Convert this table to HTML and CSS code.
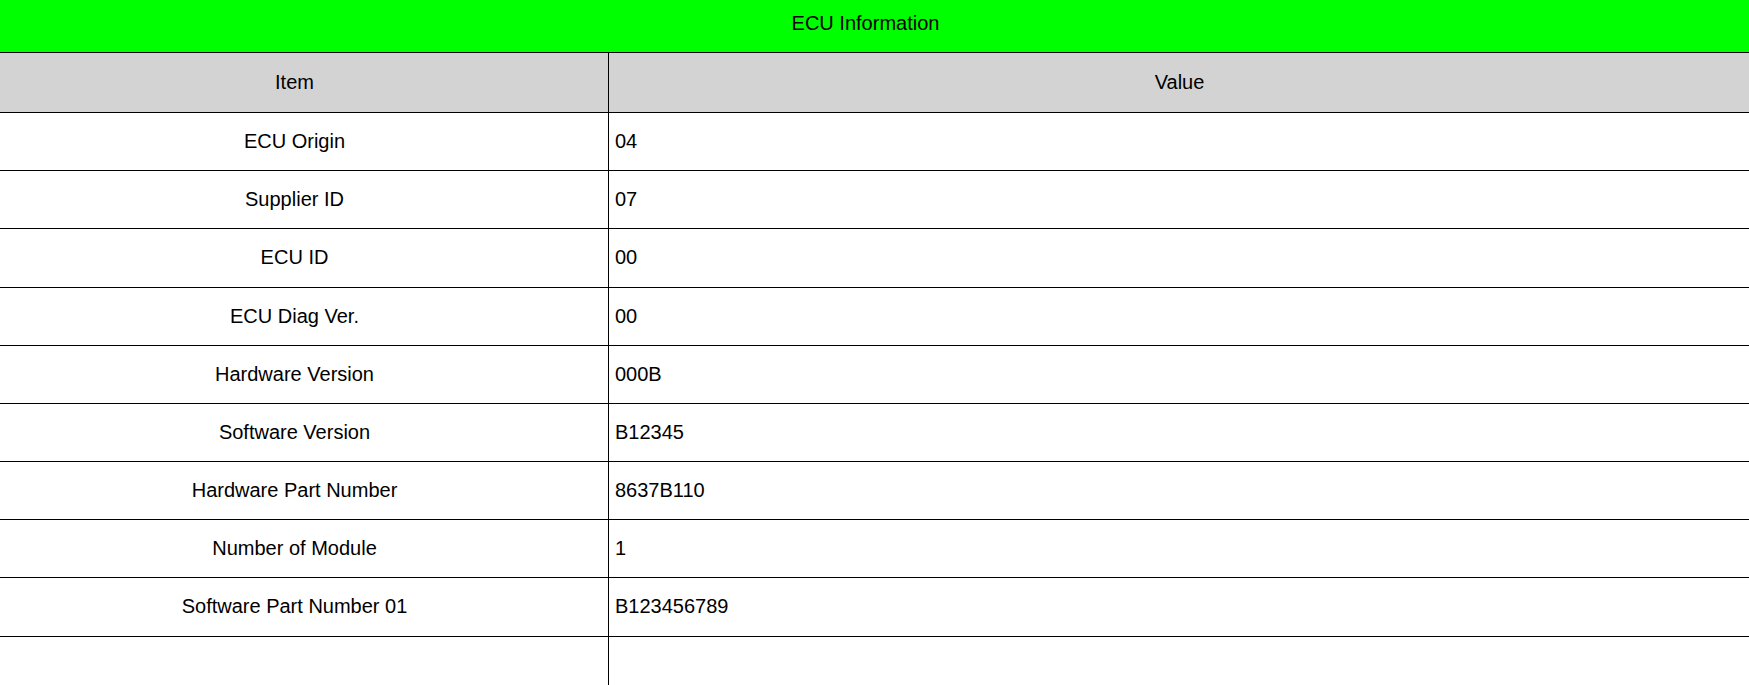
FILE: index.html
```html
<!DOCTYPE html>
<html lang="en">
<head>
<meta charset="utf-8">
<title>ECU Information</title>
<link rel="stylesheet" href="styles.css">
</head>
<body>
<table class="ecu-table">
  <colgroup>
    <col class="c-item">
    <col class="c-value">
  </colgroup>
  <thead>
    <tr><th class="title" colspan="2">ECU Information</th></tr>
    <tr class="head-row"><th class="col-item">Item</th><th class="col-value">Value</th></tr>
  </thead>
  <tbody>
    <tr><td class="item">ECU Origin</td><td class="value">04</td></tr>
    <tr><td class="item">Supplier ID</td><td class="value">07</td></tr>
    <tr><td class="item">ECU ID</td><td class="value">00</td></tr>
    <tr><td class="item">ECU Diag Ver.</td><td class="value">00</td></tr>
    <tr><td class="item">Hardware Version</td><td class="value">000B</td></tr>
    <tr><td class="item">Software Version</td><td class="value">B12345</td></tr>
    <tr><td class="item">Hardware Part Number</td><td class="value">8637B110</td></tr>
    <tr><td class="item">Number of Module</td><td class="value">1</td></tr>
    <tr><td class="item">Software Part Number 01</td><td class="value">B123456789</td></tr>
    <tr><td class="item">&nbsp;</td><td class="value">&nbsp;</td></tr>
  </tbody>
</table>
</body>
</html>
```
FILE: styles.css
```css
html, body {
  margin: 0;
  padding: 0;
  overflow: hidden;
  background: #ffffff;
}

body {
  font-family: "Liberation Sans", Arial, sans-serif;
  font-size: 20px;
  color: #000000;
}

.ecu-table {
  width: 1769px;
  margin-left: -19px;
  border-collapse: separate;
  border-spacing: 0;
  table-layout: fixed;
}

.c-item {
  width: 628px;
}

.c-value {
  width: 1141px;
}

.ecu-table th,
.ecu-table td {
  box-sizing: border-box;
  padding: 0;
  font-weight: normal;
  border-bottom: 1px solid #000000;
  white-space: nowrap;
}

.ecu-table .title {
  background: #00ff00;
  line-height: 46px;
  padding-bottom: 6px;
  text-align: center;
}

.head-row th {
  background: #d3d3d3;
  line-height: 59px;
  text-align: center;
}

.col-item {
  border-right: 1px solid #000000;
}

.item {
  line-height: 57.17px;
  text-align: center;
  border-right: 1px solid #000000;
}

.ecu-table .value {
  line-height: 57.17px;
  text-align: left;
  padding-left: 6px;
}
```
